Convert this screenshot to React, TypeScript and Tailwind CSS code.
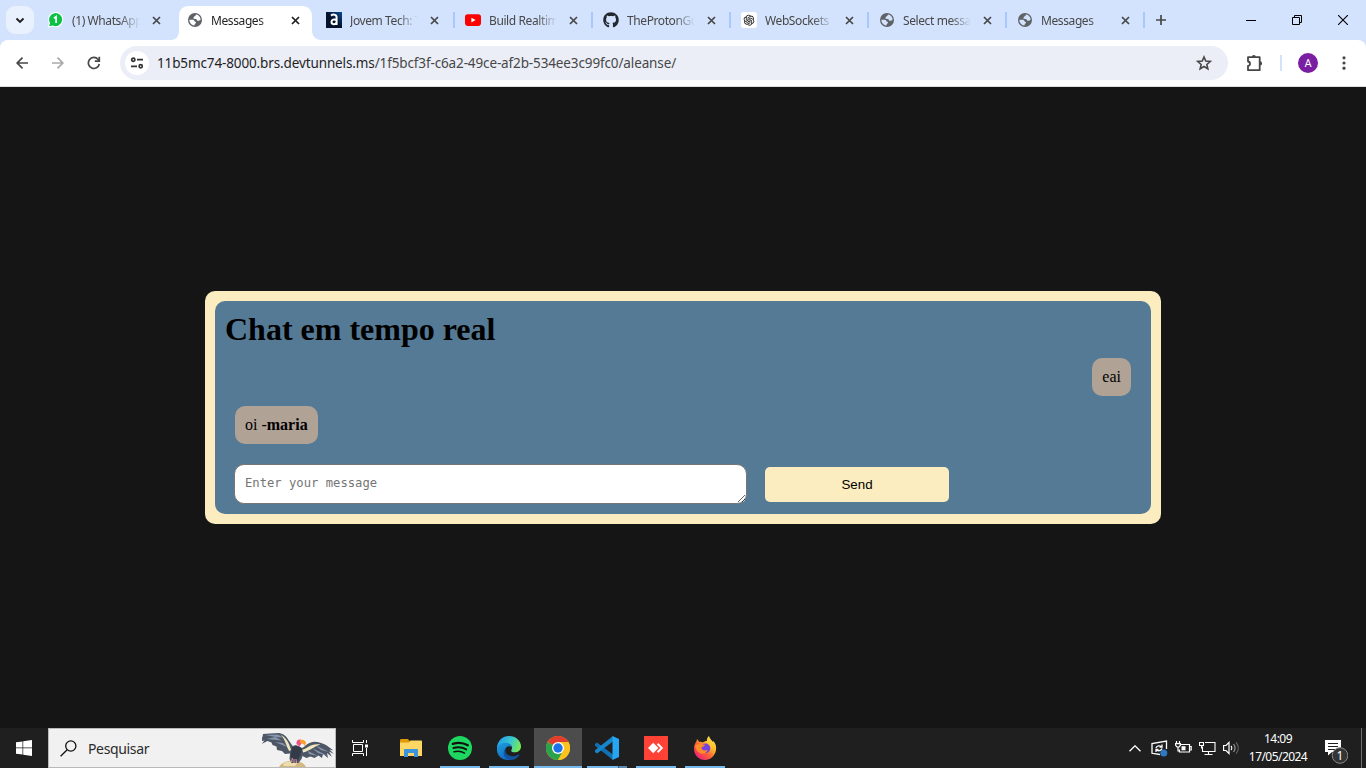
import type { ReactNode } from "react";
import { FaGithub } from "react-icons/fa";
import { AiOutlineOpenAI } from "react-icons/ai";

function Cross({ dark = false }: { dark?: boolean }) {
  return (
    <svg width="9" height="9" viewBox="0 0 9 9" className={dark ? "text-[#1f1f1f]" : "text-[#474747]"}>
      <path d="M1 1l7 7M8 1l-7 7" stroke="currentColor" strokeWidth="1.7" />
    </svg>
  );
}

function Globe() {
  return (
    <svg width="16" height="16" viewBox="0 0 16 16">
      <path
        fillRule="evenodd"
        fill="#5f6368"
        d="M8 1a7 7 0 1 1 0 14A7 7 0 0 1 8 1zM9 2.600C8.200 3.200 9 4 7.800 4.300 6.700 4.500 7 5.500 6.300 6.200 7.500 7.500 9.800 6.400 10 8.200c.2 1 1.500.6 2.200.3.6-.3 1.200-.5 1.400-.8A5.600 5.600 0 0 0 9 2.600zM2.400 7.800c-.1 3 2 5.300 4.700 5.700 1 0 .2-1.500 1.300-1.900 1-.4.8-1.700-.2-1.800-1-.2-.6-1.600-2-2z"
      />
    </svg>
  );
}

function WhatsApp() {
  return (
    <svg width="16" height="16" viewBox="0 0 16 16">
      <path d="M0 15.500l1-4.200A7.600 7.600 0 1 1 4.600 14.600z" fill="#fff" />
      <path d="M1.200 14.200l.9-3.200A6.500 6.500 0 1 1 4.900 13.500z" fill="#0cc143" />
      <path d="M6 6.200L8.100 4.700V11" fill="none" stroke="#fff" strokeWidth="1.700" />
    </svg>
  );
}

function Alura() {
  return (
    <svg width="16" height="16" viewBox="0 0 16 16">
      <defs>
        <linearGradient id="alura" x1="0" y1="1" x2="1" y2="0">
          <stop offset="0.5" stopColor="#03132e" />
          <stop offset="1" stopColor="#0b4b93" />
        </linearGradient>
      </defs>
      <rect width="16" height="16" fill="url(#alura)" />
      <path d="M5 3.600C6.800 2.200 10.600 2 10.600 5.200V13M10.300 8C8 6.800 5.500 7.700 5.500 10c0 2.700 3.700 2.800 4.900.8" fill="none" stroke="#fff" strokeWidth="2" />
    </svg>
  );
}

function YouTube() {
  return (
    <svg width="16" height="16" viewBox="0 0 16 16">
      <rect y="2.300" width="16" height="11.600" rx="2.800" fill="#f00" />
      <path d="M6.400 5.700v4.700l4.200-2.350z" fill="#fff" />
    </svg>
  );
}

const tabs: { title: string; icon: ReactNode; pad: string; active?: boolean; sep?: boolean }[] = [
  { title: "(1) WhatsApp", icon: <WhatsApp />, pad: "pl-[9px]" },
  { title: "Messages", icon: <Globe />, pad: "pl-[10px]", active: true },
  { title: "Jovem Tech: T", icon: <Alura />, pad: "pl-[11px]", sep: true },
  { title: "Build Realtim", icon: <YouTube />, pad: "pl-[12px]", sep: true },
  { title: "TheProtonGu", icon: <FaGithub size={16} className="text-[#24292f]" />, pad: "pl-[12px]", sep: true },
  {
    title: "WebSockets",
    icon: (
      <span className="flex size-4 items-center justify-center rounded-[3px] bg-white">
        <AiOutlineOpenAI size={14} className="text-[#222]" />
      </span>
    ),
    pad: "pl-[12px]",
    sep: true,
  },
  { title: "Select messa", icon: <Globe />, pad: "pl-[12px]", sep: true },
  { title: "Messages", icon: <Globe />, pad: "pl-[12px]", sep: true },
];

function TabStrip() {
  return (
    <div className="flex h-10 bg-[#d3e3fd]">
      <button className="mt-[6px] ml-[6px] flex size-7 items-center justify-center rounded-[9px] bg-[#e9f0fe]">
        <svg width="10" height="7" viewBox="0 0 10 7">
          <path d="M1.500 1.500L5 5l3.500-3.500" fill="none" stroke="#1f1f1f" strokeWidth="1.900" />
        </svg>
      </button>
      <div className="ml-[5px] flex">
        {tabs.map((t, i) => (
          <div key={i} className="relative flex h-10 w-[138px]">
            {t.active && (
              <svg width="150" height="34" viewBox="0 0 150 34" className="absolute top-[6px] left-[-6px]">
                <path d="M0 34c5 0 8-4 8-9V10C8 4 12 0 18 0h113c6 0 10 4 10 10v15c0 5 4 9 9 9z" fill="#fff" />
              </svg>
            )}
            <div className={`relative flex h-10 w-full items-center ${t.pad}`}>
              <span className="flex w-4 shrink-0 justify-center">{t.icon}</span>
              <span
                className={`mt-[2px] ml-2 w-[68px] overflow-hidden font-['Noto_Sans'] text-[12px] leading-5 tracking-[-0.400px] whitespace-nowrap [mask-image:linear-gradient(to_right,black_70%,transparent)] ${
                  t.active ? "text-[#1f1f1f]" : "text-[#474747]"
                }`}
              >
                {t.title}
              </span>
              <span className="ml-[12px]">
                <Cross dark={t.active} />
              </span>
            </div>
            {t.sep && <span className="absolute top-3 right-[-2px] h-4 w-[2px] bg-[#a8c7fa]" />}
          </div>
        ))}
      </div>
      <div className="ml-[13px] flex items-center">
        <svg width="10" height="10" viewBox="0 0 10 10">
          <path d="M5 0v10M0 5h10" stroke="#474747" strokeWidth="1.700" />
        </svg>
      </div>
      <div className="ml-auto flex items-center text-black">
        <span className="flex w-[46px] justify-center">
          <svg width="10" height="10" viewBox="0 0 10 10">
            <path d="M0 5.500h10" stroke="currentColor" />
          </svg>
        </span>
        <span className="flex w-[46px] justify-center">
          <svg width="10" height="10" viewBox="0 0 10 10" fill="none" stroke="currentColor">
            <path d="M.5 2.500h7v7h-7zM2.500 2.500v-2h7v7h-2" />
          </svg>
        </span>
        <span className="flex w-[46px] justify-center">
          <svg width="10" height="10" viewBox="0 0 10 10">
            <path d="M0 0l10 10M10 0L0 10" stroke="currentColor" strokeWidth="1.100" />
          </svg>
        </span>
      </div>
    </div>
  );
}

function Arrow({ className }: { className: string }) {
  return (
    <svg width="12" height="12" viewBox="0 0 12 12" fill="none" stroke="currentColor" strokeWidth="1.700" className={className}>
      <path d="M6.500.7L1.200 6l5.300 5.300M1.200 6H12" />
    </svg>
  );
}

function Toolbar() {
  return (
    <div className="h-[47px] bg-[#d3e3fd]">
      <div className="flex h-[47px] items-center rounded-t-lg border-b border-[#dcdee2] bg-white text-[#474747]">
        <Arrow className="ml-4" />
        <Arrow className="ml-6 rotate-180 text-[#a9a9a9]" />
        <svg width="14" height="14" viewBox="0 0 14 14" fill="none" stroke="currentColor" strokeWidth="1.700" className="ml-[23px]">
          <path d="M12.300 8A5.500 5.500 0 1 1 11 3.300L12.200 4.600" />
          <path d="M12.300.7v4.500H7.800" />
        </svg>
        <div className="ml-[19px] flex h-[34px] w-[1108px] items-center rounded-full bg-[#ebeef7]">
          <span className="ml-[5px] flex size-6 items-center justify-center rounded-full bg-white">
            <svg width="14" height="12" viewBox="0 0 14 12" fill="none" stroke="#333" strokeWidth="1.700">
              <circle cx="3.300" cy="2.700" r="1.600" />
              <path d="M7 2.700h6M1 9.300h6" />
              <circle cx="10.700" cy="9.300" r="1.600" />
            </svg>
          </span>
          <span className="ml-2 font-['Noto_Sans'] text-[13.500px] leading-5 tracking-[-0.125px] whitespace-nowrap text-[#474747]">
            <span className="text-[#1f1f1f]">11b5mc74-8000.brs.devtunnels.ms</span>
            /1f5bcf3f-c6a2-49ce-af2b-534ee3c99fc0/aleanse/
          </span>
          <svg width="16" height="16" viewBox="0 0 16 16" fill="none" stroke="currentColor" strokeWidth="1.600" className="mr-4 ml-auto">
            <path d="M8 2l1.750 4.100 4.450.4-3.370 2.940L11.840 13.800 8 11.480 4.160 13.800l1.010-4.360L1.800 6.500l4.450-.4z" />
          </svg>
        </div>
        <svg width="18" height="18" viewBox="0 0 18 18" className="ml-[18px]">
          <path
            d="M2 3.200H13.700V16.200H2v-4.300c2.700-.4 2.700-4 0-4.400z"
            fill="none"
            stroke="currentColor"
            strokeWidth="1.800"
            strokeLinejoin="round"
          />
          <path d="M5.800 3a2 2 0 0 1 4 0zM14 7.300a2 2 0 0 1 0 4.200z" fill="currentColor" />
        </svg>
        <span className="ml-4 h-4 w-[2px] bg-[#d3e3fd]" />
        <span className="ml-4 flex size-5 items-center justify-center rounded-full bg-[#7b1fa2] font-[Roboto] text-[11px] leading-none text-white">
          A
        </span>
        <svg width="4" height="14" viewBox="0 0 4 14" fill="currentColor" className="ml-6">
          <circle cx="2" cy="1.800" r="1.600" />
          <circle cx="2" cy="7" r="1.600" />
          <circle cx="2" cy="12.200" r="1.600" />
        </svg>
      </div>
    </div>
  );
}

function Chat() {
  return (
    <main className="flex h-[641px] justify-center bg-[#151515] pt-[204px] font-['Liberation_Serif'] text-black">
      <section className="h-[233px] w-[956px] rounded-[10px] bg-[#fbedc0] p-[10px]">
        <div className="flex h-[213px] flex-col rounded-[10px] bg-[#557a95] p-[10px]">
          <h1 className="h-[37px] text-[32px] leading-[37px] font-bold">Chat em tempo real</h1>
          <div className="mx-[10px] mt-[10px] flex flex-col gap-[10px] text-[16px] leading-[18px]">
            <p className="self-end rounded-[10px] bg-[#b1a296] p-[10px]">eai</p>
            <p className="self-start rounded-[10px] bg-[#b1a296] p-[10px]">
              oi -<b>maria</b>
            </p>
          </div>
          <form className="mt-5 ml-[9px] flex items-start">
            <textarea
              placeholder="Enter your message"
              className="block h-[40px] w-[513px] rounded-[10px] border border-[#767676] bg-white px-[10px] py-[11px] font-['DejaVu_Sans_Mono'] text-[12.200px] leading-[15px] placeholder:text-[#757575]"
            />
            <button
              type="button"
              className="mt-[3px] ml-[18px] h-[35px] w-[184px] rounded-[5px] bg-[#fbedc0] font-['Liberation_Sans'] text-[13.333px]"
            >
              Send
            </button>
          </form>
        </div>
      </section>
    </main>
  );
}

function Condor() {
  return (
    <svg width="72" height="38" viewBox="0 0 72 38">
      <path d="M17 38c2-4 8-6.500 14-6.500S42 34 44 38z" fill="#d3b981" />
      <path d="M21 35c4-3 10-3.500 15-2.500L33 37H22z" fill="#ecdcae" />
      <path
        d="M1 5l7-.6L17 4c5 1 8 4 9.500 7l4.200 6 3.300-1 6 3c3-1 5-5.500 12-6.300 5 .3 8 1.300 12 3.300l7.500 5.500-4-1 4.500 4.500-5-2.500 3 5.500-5-4 1 5-5-4-1 4-3.500-2.500-4 2.500-4-1.500-4 1.500-4-2-1 3-3 4h-7l-2-4 .5-5.500-5 .5-3-3-5-1-.5-3.500-4-1.500-1-2.500-4-1.500-6 3 3-3.500-5 1 3-2.800-4-.2 4-1.500z"
        fill="#4d5665"
      />
      <path d="M3 6l13-.5 5 3-6-.3zM5 10l8-2 7 3.500-8-.7zM13 13l8 1 4 4zM53 16l14 7-8-2zM50 19l16 8-10-3zM46 22l10 5-9-2z" fill="#8796ae" />
      <path d="M18.500 5.800c5 2 8.500 7.700 10.500 15l-1.500 1.500C24 18 23.500 10 18.500 5.800zM40.500 20.500C45 20 48 14 58.500 15.500c-6 1.500-9.500 6-17.500 8z" fill="#efe7bd" />
      <path d="M30 18.500c3-2.500 8-2 10 1.500L38 27l-2.500 5H30l-1.500-5z" fill="#333b49" />
      <path d="M30.500 29l-1 4M34 30l.5 4M32 30v4" fill="none" stroke="#d98da0" strokeWidth="1.100" />
      <path d="M34.500 15c-.5-3 1.500-5 4.500-4.300l1 3-2.500 3.800z" fill="#ed4e87" />
      <path d="M37.500 11c3.500-1 6.500.5 6.500 3l-1.500 3-1-2-3-.7z" fill="#ff9d2e" />
    </svg>
  );
}

function Folder() {
  return (
    <svg width="22" height="19" viewBox="0 0 22 19">
      <path d="M0 1.500C0 .7.5 0 1.300 0H8l2 2.500V6H0z" fill="#e19a05" />
      <path d="M0 3.500h9l1.500-2H21c.6 0 1 .4 1 1V17H0z" fill="#ffd765" />
      <path d="M4 18V11c0-.6.4-1 1-1h12c.6 0 1 .4 1 1v7h-4v-4H8v4z" fill="#3b94dc" />
    </svg>
  );
}

function Spotify() {
  return (
    <svg width="24" height="24" viewBox="0 0 24 24">
      <circle cx="12" cy="12" r="12" fill="#1ed760" />
      <g fill="none" stroke="#111" strokeLinecap="round">
        <path d="M4.800 7.900c5-1.500 10.800-1 15 1.400" strokeWidth="2.300" />
        <path d="M5.400 12c4.200-1.200 9-.8 12.800 1.400" strokeWidth="1.900" />
        <path d="M6 15.800c3.500-1 7.300-.7 10.600 1.300" strokeWidth="1.500" />
      </g>
    </svg>
  );
}

function Edge() {
  return (
    <svg width="24" height="24" viewBox="0 0 24 24">
      <defs>
        <linearGradient id="edgeTop" x1="0" y1=".2" x2="1" y2=".5">
          <stop stopColor="#229ce8" />
          <stop offset=".55" stopColor="#37c6d0" />
          <stop offset="1" stopColor="#76ea55" />
        </linearGradient>
        <linearGradient id="edgeSide" x1="0" y1="0" x2=".6" y2="1">
          <stop stopColor="#1ba1e2" />
          <stop offset="1" stopColor="#1267be" />
        </linearGradient>
      </defs>
      <path d="M0 11C.8 4.500 5.600 0 12 0c7 0 12 5 12 10.300 0 4-3 6-6.300 6-2.500 0-4-1-3.300-2.200 1.700-3 .1-6.400-4.400-6.400C5.800 7.700 1.600 9.300 0 13z" fill="url(#edgeTop)" />
      <path d="M0 13c.3-4 4.500-6.300 8.500-6.300 3.500 0 6 2 6.200 4.800-2-2.300-6-1.500-6.500 2.200-.5 4.200 2.700 8.500 6.800 10C6.500 25.500-.6 20 0 13z" fill="url(#edgeSide)" />
      <path d="M8.200 13c-1.200 5.500 6 9.500 12.700 5.700 1-.5 1.700 0 1.200.8C20 22.500 17 24 13.500 24 8 23.500 4.500 17 8.200 13z" fill="#12529f" />
    </svg>
  );
}

function Chrome() {
  return (
    <svg width="24" height="24" viewBox="0 0 24 24">
      <circle cx="12" cy="12" r="12" fill="#fcc31e" />
      <path d="M12 12L1.600 6A12 12 0 0 1 22.400 6z" fill="#e33b2e" />
      <path d="M12 12L1.600 6A12 12 0 0 0 12 24l5.200-9z" fill="#2ba24c" />
      <path d="M12 6h10.400a12 12 0 0 1-10.400 18l5.200-9z" fill="#fcc31e" />
      <circle cx="12" cy="12" r="6" fill="#fff" />
      <circle cx="12" cy="12" r="4.700" fill="#1a73e8" />
    </svg>
  );
}

function VsCode() {
  return (
    <svg width="24" height="24" viewBox="0 0 24 24">
      <path d="M0 8l2-1.500L18 18.500V24L0 9.700z" fill="#1070b3" />
      <path d="M0 16l2 1.500L18 5.500V0L0 14.300z" fill="#1685cb" />
      <path d="M17.500 0L24 3v18l-6.500 3z" fill="#28a5f2" />
    </svg>
  );
}

function AnyDesk() {
  return (
    <svg width="24" height="24" viewBox="0 0 24 24">
      <path d="M0 0h24v24H0z" fill="#ff4136" />
      <path d="M9.200 6.800l5.200 5.200-5.200 5.200L4 12z" fill="#fff" />
      <path d="M13.500 7.700l4.300 4.300-4.300 4.300" fill="none" stroke="#fff" strokeWidth="2" />
    </svg>
  );
}

function Firefox() {
  return (
    <svg width="24" height="24" viewBox="0 0 24 24">
      <defs>
        <linearGradient id="fox" x1=".9" y1=".1" x2=".2" y2=".9">
          <stop stopColor="#fff246" />
          <stop offset=".35" stopColor="#ffb22c" />
          <stop offset=".65" stopColor="#ff6037" />
          <stop offset="1" stopColor="#f02571" />
        </linearGradient>
      </defs>
      <path d="M1 13C1 9 2.200 7 3.400 5.500L4 3l2.500 3c1.500-.4 2.600 0 3.500.5C11 5.300 13 4.800 14 5c-.5-2 .5-4 2-5 .6 3 2.500 3.500 4 6l.5-1c2.300 3 3 5.500 2.500 9-1 6-5.500 10-11 10C5.500 24 1 19 1 13z" fill="url(#fox)" />
      <circle cx="12.500" cy="12.300" r="4.800" fill="#7544dc" />
      <path d="M2 10c2-2 5-3 7-1.500l3 .2c-.2 1.500-2.500 2-3.500 2.500 0 3 3 4 6 2.800-1 3-4.500 4.700-8 3C3.500 15.500 3 13 2 10z" fill="#ff8a28" />
      <path d="M13 5.500c4 1 6 5 4.500 9 2-2 2-5 .5-7.500L16 3z" fill="#ffcf35" />
    </svg>
  );
}

const apps: { name: string; icon: ReactNode; bar: boolean; active?: boolean; extra?: boolean }[] = [
  { name: "Explorer", icon: <Folder />, bar: false },
  { name: "Spotify", icon: <Spotify />, bar: true },
  { name: "Edge", icon: <Edge />, bar: true },
  { name: "Chrome", icon: <Chrome />, bar: true, active: true },
  { name: "Code", icon: <VsCode />, bar: true, extra: true },
  { name: "AnyDesk", icon: <AnyDesk />, bar: true },
  { name: "Firefox", icon: <Firefox />, bar: true },
];

function Taskbar() {
  return (
    <footer className="flex h-10 bg-[#1f1f1f] text-white">
      <div className="flex w-12 items-center justify-center">
        <svg width="16" height="16" viewBox="0 0 16 16" fill="#fff">
          <path d="M0 2.300l6.500-.9v6.200H0zM7.200 1.300L16 0v7.600H7.200zM0 8.300h6.500v6.200L0 13.700zM7.200 8.300H16V16l-8.800-1.300z" />
        </svg>
      </div>
      <div className="flex w-72 items-center border border-[#b9b9b9] bg-[#f1f1f1] pl-[11px] text-[#2b2b2b]">
        <svg width="17" height="17" viewBox="0 0 17 17" fill="none" stroke="#111" strokeWidth="1.300">
          <circle cx="10.800" cy="6" r="5.100" />
          <path d="M7.200 9.700L.6 16.300" />
        </svg>
        <span className="mt-[2px] ml-[11px] font-['Noto_Sans'] text-[14px] leading-5 tracking-[-0.350px]">Pesquisar</span>
        <span className="mr-px ml-auto">
          <Condor />
        </span>
      </div>
      <div className="flex w-12 items-center justify-center">
        <svg width="17" height="16" viewBox="0 0 17 16" fill="none" stroke="#fff">
          <path d="M1.500 4.500h9v7h-9zM.5 0v2.500h11V0M.5 16v-2.500h11V16M14.500 0v3M14.500 8v8" />
          <path d="M13 4.500h3v3h-3z" fill="#fff" stroke="none" />
        </svg>
      </div>
      <div className="ml-[3px] flex gap-px">
        {apps.map((a) => (
          <div key={a.name} className={`relative flex w-12 items-center justify-center ${a.active ? "bg-[#4c4c4c]" : ""}`}>
            {a.icon}
            {a.bar && (
              <span className={`absolute bottom-0 flex h-[2px] bg-[#76b9ed] ${a.active ? "inset-x-0" : "inset-x-1"}`}>
                {a.extra && <span className="ml-auto w-[9px] border-l border-[#3d5c75] bg-[#5a8bb1]" />}
              </span>
            )}
          </div>
        ))}
      </div>
      <div className="ml-auto flex items-center">
        <svg width="12" height="7" viewBox="0 0 12 7" fill="none" stroke="#fff" strokeWidth="1.300">
          <path d="M.5 6.300L6 .8l5.500 5.500" />
        </svg>
        <svg width="17" height="17" viewBox="0 0 17 17" fill="none" stroke="#fff" strokeWidth="1.300" className="ml-[10px]">
          <path d="M9 14.500L1 13.300V3.500L15.500 1v8" />
          <path d="M5 8c.5-2.300 4.500-3 5.500-1M11 4.500V7H8.500M11 8.500c-.5 2.500-4.500 3-5.500 1M5 12V9.500h2.500" />
          <circle cx="12.800" cy="13" r="3.500" fill="#2f78c4" stroke="none" />
        </svg>
        <svg width="17" height="14" viewBox="0 0 17 14" fill="none" stroke="#fff" strokeWidth="1.200" className="ml-[7px]">
          <path d="M6 3.500h8.500v7.500H4.500V8.500M15 5.500h1.200v3.500H15M1.500 0v2.500M4.500 0v2.500M.6 2.600h4.800v1.700L4 6H2L.6 4.300zM3 6v4h1.500" />
          <path d="M6.500 5.200h4V9.300h-4z" fill="#fff" stroke="none" />
        </svg>
        <svg width="17" height="15" viewBox="0 0 17 15" fill="none" stroke="#fff" strokeWidth="1.100" className="ml-[7px]">
          <path d="M6 1.500h10v9H3.500V5.500M5.500 13.500h8M9.500 10.500v3" />
          <path d="M.5 1.500h4v3h-4zM2.500 4.500v3" />
        </svg>
        <svg width="17" height="14" viewBox="0 0 17 14" fill="none" stroke="#fff" strokeWidth="1.200" className="ml-[7px]">
          <path d="M.6 4.500H3L6 1.500v11L3 9.500H.6zM8 5c1 1 1 3 0 4" />
          <path d="M10.500 3c2 2.500 2 5.500 0 8" stroke="#999" />
          <path d="M13 1.300c3 3.500 3 8 0 11.400" stroke="#666" />
        </svg>
        <div className="ml-[7px] w-[62px] text-center font-['Noto_Sans'] text-[12px] leading-[18px] tracking-[-0.550px]">
          <div>14:09</div>
          <div>17/05/2024</div>
        </div>
        <div className="relative mt-[8px] ml-[15px] h-6 w-6">
          <svg width="24" height="24" viewBox="0 0 24 24">
            <path d="M1 0h16v12H8l-4 3.500V12H1z" fill="#fff" />
            <path d="M4 3.500h10M4 6.500h10M4 9.500h7" stroke="#1f1f1f" />
            <circle cx="16" cy="15.500" r="7.800" fill="#343434" stroke="#888" />
          </svg>
          <span className="absolute top-[8px] left-[12.500px] font-['Noto_Sans'] text-[12px] leading-[15px]">1</span>
        </div>
        <span className="mr-[4px] ml-[13px] h-10 w-px bg-[#6d6d6d]" />
      </div>
    </footer>
  );
}

export default function App() {
  return (
    <div className="h-[768px] w-[1366px] overflow-hidden">
      <TabStrip />
      <Toolbar />
      <Chat />
      <Taskbar />
    </div>
  );
}
